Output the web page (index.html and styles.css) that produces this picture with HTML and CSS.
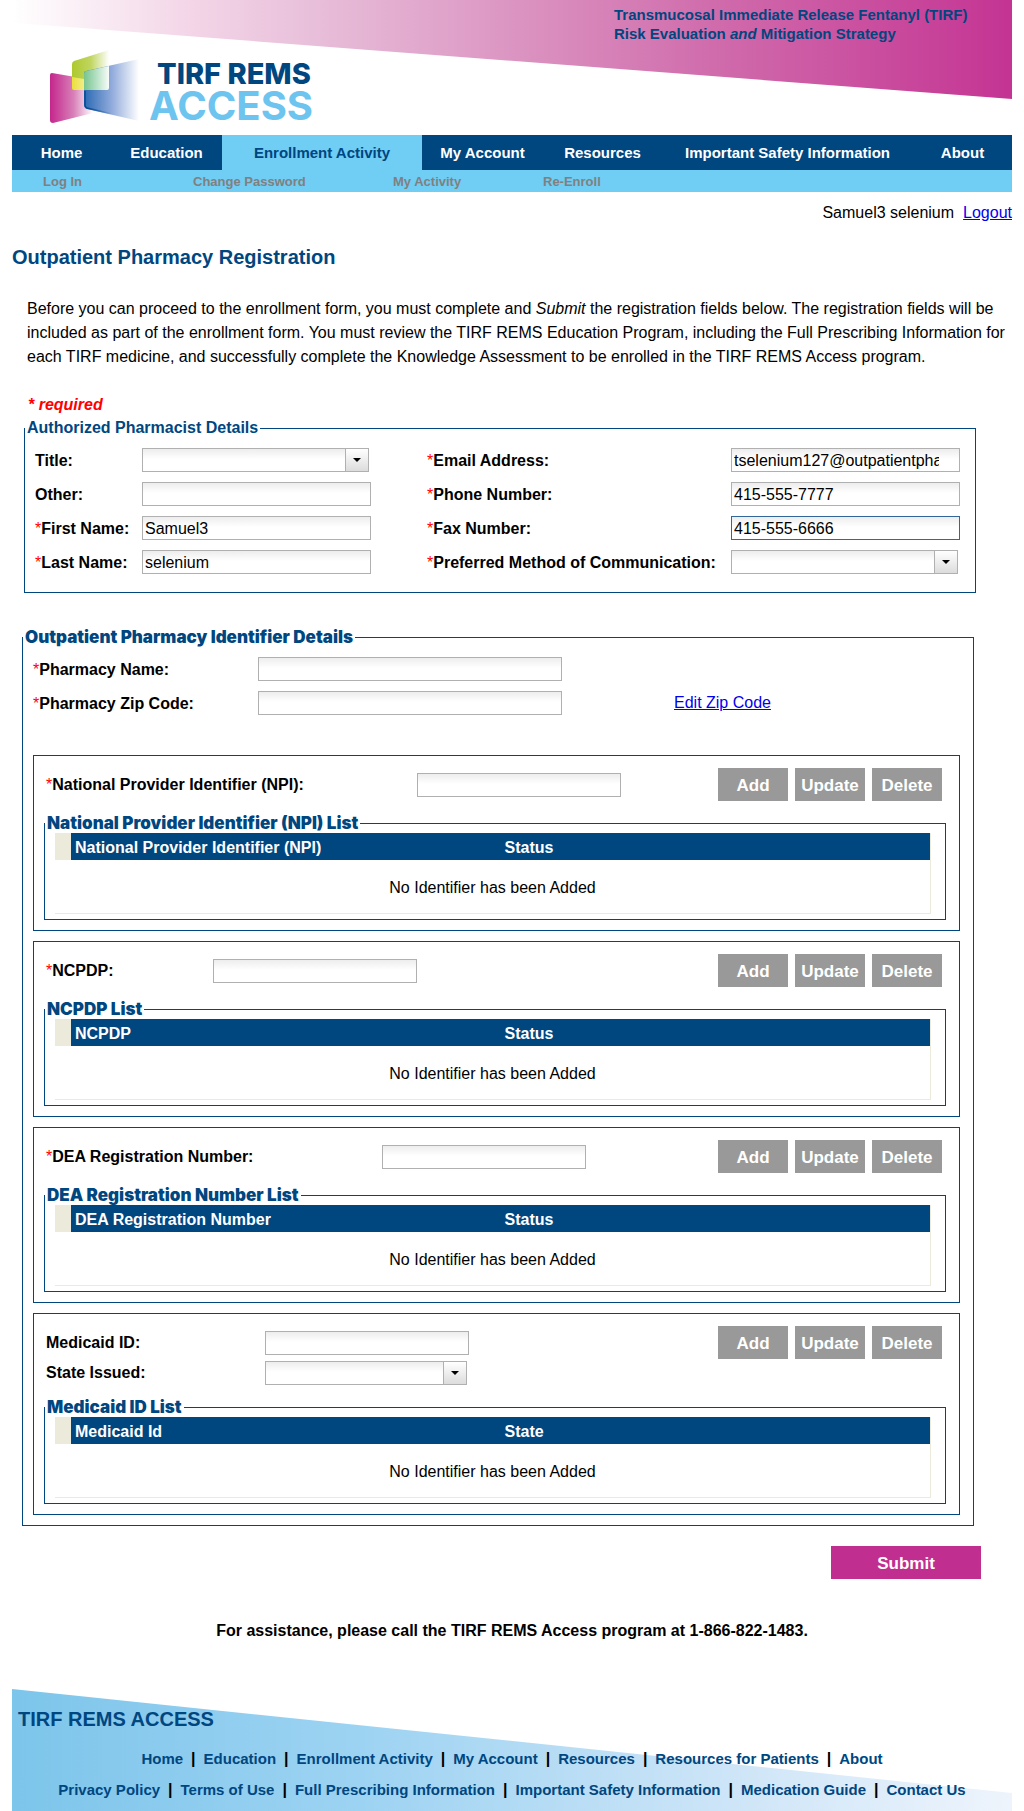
FILE: index.html
```html
<!DOCTYPE html>
<html lang="en">
<head>
<meta charset="utf-8">
<title>Outpatient Pharmacy Registration</title>
<link rel="stylesheet" href="styles.css">
</head>
<body>
<div class="page">
  <header class="masthead">
    <svg class="logo" viewBox="0 0 290 80" width="290" height="80" role="img" aria-label="TIRF REMS ACCESS">
      <defs>
        <linearGradient id="pink"><stop offset="0" stop-color="#c4268c"/><stop offset=".55" stop-color="#d880b8"/><stop offset="1" stop-color="#fff"/></linearGradient>
        <linearGradient id="green"><stop offset="0" stop-color="#adc92c"/><stop offset=".5" stop-color="#c0d560"/><stop offset="1" stop-color="#fff"/></linearGradient>
        <linearGradient id="blue"><stop offset="0" stop-color="#2a6ab4"/><stop offset=".5" stop-color="#90aadb"/><stop offset="1" stop-color="#fff"/></linearGradient>
        <linearGradient id="mint"><stop offset="0" stop-color="#78c48c"/><stop offset=".5" stop-color="#b4e0c4"/><stop offset="1" stop-color="#f8fcf8"/></linearGradient>
        <linearGradient id="yellow"><stop offset="0" stop-color="#ecdf3a"/><stop offset="1" stop-color="#f2ec8c"/></linearGradient>
        <linearGradient id="edge"><stop offset="0" stop-color="#00478f"/><stop offset="1" stop-color="#00478f" stop-opacity="0"/></linearGradient>
      </defs>
      <path d="M12 23Q10 23 10 25V70Q10 73 13 73L53 63V30Z" fill="url(#pink)"/>
      <path d="M34 11Q32 12 32 14V38Q32 40 34 40H67Q69 40 69 38V0Z" fill="url(#green)"/>
      <path d="M46 21Q44 21 44 24V55Q44 58 47 59L99 71V9Z" fill="url(#blue)"/>
      <path d="M44 24Q44 21 46 21L69 16V38Q69 40 67 40H44Z" fill="url(#mint)"/>
      <path d="M32 27L44 29V40H34Q32 40 32 38Z" fill="url(#yellow)"/>
      <path d="M45 41V55Q45 57 47 58L72 64" fill="none" stroke="url(#edge)" stroke-width="1.4"/>
      <text class="logo-top" x="117" y="34">TIRF REMS</text>
      <text class="logo-bottom" x="109" y="70">ACCESS</text>
    </svg>
    <p class="tagline">Transmucosal Immediate Release Fentanyl (TIRF)<br>Risk Evaluation <em>and</em> Mitigation Strategy</p>
  </header>

  <nav class="mainnav" aria-label="Main">
    <a href="#">Home</a><a href="#">Education</a><a href="#" class="current">Enrollment Activity</a><a href="#">My Account</a><a href="#">Resources</a><a href="#">Important Safety Information</a><a href="#">About</a>
  </nav>
  <nav class="subnav" aria-label="Enrollment Activity">
    <a href="#">Log In</a><a href="#">Change Password</a><a href="#">My Activity</a><a href="#">Re-Enroll</a>
  </nav>

  <p class="user"><span>Samuel3 selenium</span><a href="#">Logout</a></p>

  <main>
    <h1 class="title">Outpatient Pharmacy Registration</h1>
    <p class="intro">Before you can proceed to the enrollment form, you must complete and <em>Submit</em> the registration fields below. The registration fields will be included as part of the enrollment form. You must review the TIRF REMS Education Program, including the Full Prescribing Information for each TIRF medicine, and successfully complete the Knowledge Assessment to be enrolled in the TIRF REMS Access program.</p>
    <p class="required-note">* required</p>

    <form>
      <fieldset class="panel pharmacist">
        <legend>Authorized Pharmacist Details</legend>
        <div class="person-grid">
          <label for="title">Title:</label>
          <select id="title" class="field"><option></option></select>
          <label for="email"><i>*</i>Email Address:</label>
          <input id="email" class="field" type="text" value="tselenium127@outpatientpharmacy.com">
          <label for="other">Other:</label>
          <input id="other" class="field" type="text">
          <label for="phone"><i>*</i>Phone Number:</label>
          <input id="phone" class="field" type="text" value="415-555-7777">
          <label for="first"><i>*</i>First Name:</label>
          <input id="first" class="field" type="text" value="Samuel3">
          <label for="fax"><i>*</i>Fax Number:</label>
          <input id="fax" class="field active" type="text" value="415-555-6666">
          <label for="last"><i>*</i>Last Name:</label>
          <input id="last" class="field" type="text" value="selenium">
          <label for="contact"><i>*</i>Preferred Method of Communication:</label>
          <select id="contact" class="field"><option></option></select>
        </div>
      </fieldset>

      <fieldset class="panel pharmacy">
        <legend class="heavy">Outpatient Pharmacy Identifier Details</legend>
        <div class="pharmacy-grid">
          <label for="pname"><i>*</i>Pharmacy Name:</label>
          <input id="pname" class="field wide" type="text">
          <span></span>
          <label for="pzip"><i>*</i>Pharmacy Zip Code:</label>
          <input id="pzip" class="field wide" type="text">
          <a href="#">Edit Zip Code</a>
        </div>

        <section class="identifier">
          <div class="entry">
            <div class="entry-fields npi">
              <label for="npi"><i>*</i>National Provider Identifier (NPI):</label>
              <input id="npi" class="field mid" type="text">
            </div>
            <div class="actions"><button type="button">Add</button><button type="button">Update</button><button type="button">Delete</button></div>
          </div>
          <fieldset class="panel list">
            <legend class="heavy">National Provider Identifier (NPI) List</legend>
            <table>
              <thead><tr><td class="mark"></td><th>National Provider Identifier (NPI)</th><th>Status</th></tr></thead>
              <tbody><tr><td colspan="3">No Identifier has been Added</td></tr></tbody>
            </table>
          </fieldset>
        </section>

        <section class="identifier">
          <div class="entry">
            <div class="entry-fields ncpdp">
              <label for="ncpdp"><i>*</i>NCPDP:</label>
              <input id="ncpdp" class="field mid" type="text">
            </div>
            <div class="actions"><button type="button">Add</button><button type="button">Update</button><button type="button">Delete</button></div>
          </div>
          <fieldset class="panel list">
            <legend class="heavy">NCPDP List</legend>
            <table>
              <thead><tr><td class="mark"></td><th>NCPDP</th><th>Status</th></tr></thead>
              <tbody><tr><td colspan="3">No Identifier has been Added</td></tr></tbody>
            </table>
          </fieldset>
        </section>

        <section class="identifier">
          <div class="entry">
            <div class="entry-fields dea">
              <label for="dea"><i>*</i>DEA Registration Number:</label>
              <input id="dea" class="field mid" type="text">
            </div>
            <div class="actions"><button type="button">Add</button><button type="button">Update</button><button type="button">Delete</button></div>
          </div>
          <fieldset class="panel list">
            <legend class="heavy">DEA Registration Number List</legend>
            <table>
              <thead><tr><td class="mark"></td><th>DEA Registration Number</th><th>Status</th></tr></thead>
              <tbody><tr><td colspan="3">No Identifier has been Added</td></tr></tbody>
            </table>
          </fieldset>
        </section>

        <section class="identifier">
          <div class="entry">
            <div class="entry-fields medicaid">
              <label for="medicaid">Medicaid ID:</label>
              <input id="medicaid" class="field mid" type="text">
              <label for="state">State Issued:</label>
              <select id="state" class="field mid"><option></option></select>
            </div>
            <div class="actions"><button type="button">Add</button><button type="button">Update</button><button type="button">Delete</button></div>
          </div>
          <fieldset class="panel list">
            <legend class="heavy">Medicaid ID List</legend>
            <table>
              <thead><tr><td class="mark"></td><th>Medicaid Id</th><th>State</th></tr></thead>
              <tbody><tr><td colspan="3">No Identifier has been Added</td></tr></tbody>
            </table>
          </fieldset>
        </section>
      </fieldset>

      <div class="submit-row"><button type="submit" class="submit">Submit</button></div>
    </form>

    <p class="assist">For assistance, please call the TIRF REMS Access program at 1-866-822-1483.</p>
  </main>

  <footer class="footer">
    <h2>TIRF REMS ACCESS</h2>
    <nav class="footlinks" aria-label="Footer">
      <a href="#">Home</a><b>|</b><a href="#">Education</a><b>|</b><a href="#">Enrollment Activity</a><b>|</b><a href="#">My Account</a><b>|</b><a href="#">Resources</a><b>|</b><a href="#">Resources for Patients</a><b>|</b><a href="#">About</a>
    </nav>
    <nav class="footlinks" aria-label="Legal">
      <a href="#">Privacy Policy</a><b>|</b><a href="#">Terms of Use</a><b>|</b><a href="#">Full Prescribing Information</a><b>|</b><a href="#">Important Safety Information</a><b>|</b><a href="#">Medication Guide</a><b>|</b><a href="#">Contact Us</a>
    </nav>
  </footer>
</div>
</body>
</html>
```
FILE: styles.css
```css
* { box-sizing: border-box; }
body {
  margin: 0;
  font: 16px/24px "Liberation Sans", Arial, sans-serif;
  color: #000;
  background: #fff;
}
p, h1, h2 { margin: 0; }
a { color: #00e; }
.page { margin: 0 12px; }

.masthead {
  position: relative;
  display: flex;
  justify-content: space-between;
  height: 135px;
}
.masthead::before {
  content: "";
  position: absolute;
  inset: 0 0 36px;
  background: linear-gradient(90deg, #fff 0%, #f3d5e7 18%, #e8bfda 30%, #dc97c3 49%, #d06cac 70%, #c43493 100%);
  clip-path: polygon(0 0, 100% 0, 100% 100%, 0 23%);
}
.logo { position: relative; margin: 50px 0 0 28px; }
.logo-top { font: 800 29px Inter, sans-serif; fill: #00467f; }
.logo-bottom { font: 700 40px Inter, sans-serif; fill: #6dc4ef; }
.tagline {
  position: relative;
  width: 398px;
  padding-top: 5px;
  font-size: 15px;
  font-weight: bold;
  line-height: 19px;
  color: #00467f;
}

.mainnav {
  display: grid;
  grid-template-columns: 99fr 111fr 200fr 121fr 119fr 251fr 99fr;
  background: #00467f;
}
.mainnav a {
  font-size: 15px;
  font-weight: bold;
  line-height: 35px;
  text-align: center;
  text-decoration: none;
  color: #fff;
}
.mainnav .current { background: #70cdf4; color: #00467f; }
.subnav {
  display: grid;
  grid-template-columns: 150fr 200fr 150fr 469fr;
  padding: 1px 0 0 31px;
  background: #70cdf4;
}
.subnav a {
  font-size: 13px;
  font-weight: bold;
  line-height: 21px;
  text-decoration: none;
  color: #808080;
}

.user { display: flex; justify-content: flex-end; gap: 9px; padding-top: 9px; }
.title { margin-top: 20px; font-size: 20px; line-height: 24px; color: #00467f; }
.intro { margin: 28px 0 24px; padding-left: 15px; }
.required-note { padding-left: 16px; font-weight: bold; font-style: italic; color: #f00; }

.panel { min-width: 0; border: 1px solid #00467f; padding: 0; }
.panel legend { padding: 0 2px; font-weight: bold; line-height: 18px; color: #00467f; }
.panel legend.heavy { font-family: Inter, sans-serif; font-size: 17px; font-weight: 900; }
label { height: 24px; padding-top: 1px; font-weight: bold; }
label i { font-weight: normal; font-style: normal; color: #f00; }

.field {
  width: 229px;
  height: 24px;
  padding: 1px 20px 0 2px;
  border: 1px solid #b0b0b0;
  border-radius: 0;
  font: inherit;
  color: #000;
  background: linear-gradient(#ededed, #fff 10px);
}
.field.active { border-color: #336699; }
.wide { width: 304px; }
.mid { width: 204px; }
select.field {
  width: 227px;
  appearance: none;
  background:
    url("data:image/svg+xml,%3Csvg xmlns='http://www.w3.org/2000/svg' width='8' height='4'%3E%3Cpath d='M0 0h8L4 4z'/%3E%3C/svg%3E") right 7px center no-repeat,
    linear-gradient(#b0b0b0, #b0b0b0) right 22px top / 1px 100% no-repeat,
    linear-gradient(#fff, #dcdcdc) right / 22px 100% no-repeat,
    linear-gradient(#ededed, #fff 10px);
}
select.field.mid { width: 202px; }

.pharmacist { margin: 2px 36px 0 12px; }
.person-grid {
  display: grid;
  grid-template-columns: 107fr 285fr 304fr 244fr;
  row-gap: 10px;
  padding: 11px 0 18px 10px;
}
.pharmacy { margin: 35px 38px 0 10px; }
.pharmacy-grid {
  display: grid;
  grid-template-columns: 225fr 416fr 299fr;
  row-gap: 10px;
  padding: 11px 0 40px 10px;
}
.identifier { margin: 0 13px 10px 10px; padding: 12px 13px 10px 10px; border: 1px solid #00467f; }
.entry { display: flex; justify-content: space-between; padding: 0 4px 0 2px; }
.entry-fields { display: grid; row-gap: 6px; padding: 5px 0 7px; }
.entry-fields label { padding-top: 0; }
.npi { grid-template-columns: 371px auto; }
.ncpdp { grid-template-columns: 167px auto; }
.dea { grid-template-columns: 336px auto; }
.medicaid { grid-template-columns: 219px auto; padding-bottom: 3px; }
.actions { display: flex; gap: 7px; }
button {
  width: 70px;
  height: 33px;
  padding: 2px 0 0;
  border: 0;
  font: bold 17px "Liberation Sans", Arial, sans-serif;
  color: #fff;
  background: #999;
}
.list { margin: 10px 0 0; }
.list table {
  width: calc(100% - 24px);
  margin: 1px 14px 5px 10px;
  border-collapse: separate;
  border-spacing: 0;
  border-right: 1px solid #eceadb;
  border-bottom: 1px solid #eceadb;
  table-layout: fixed;
}
.list th {
  height: 27px;
  padding: 2px 4px 0;
  text-align: left;
  color: #fff;
  background: #00467f;
}
.list td { height: 53px; padding: 2px 0 0; text-align: center; }
.list td.mark { width: 16px; height: 27px; background: #eceadb; }

.submit-row { display: flex; justify-content: flex-end; margin: 20px 31px 0 0; }
.submit { width: 150px; background: #c02e90; }
.assist { margin-top: 40px; text-align: center; font-weight: bold; }

.footer {
  position: relative;
  margin-top: 46px;
  padding: 18px 0 9px;
}
.footer::before {
  content: "";
  position: absolute;
  inset: 0;
  z-index: -1;
  background: linear-gradient(90deg, #7dc5eb 0%, #9dd3f2 35%, #cbe4f7 70%, #eef4fc 100%);
  clip-path: polygon(0 0, 100% 104px, 100% 100%, 0 100%);
}
.footer h2 { padding-left: 6px; font-size: 20px; line-height: 24px; color: #00467f; }
.footlinks {
  display: flex;
  justify-content: center;
  gap: 8px;
  padding-top: 7px;
  font-size: 15px;
}
.footlinks:nth-of-type(1) { padding-top: 16px; }
.footlinks a { font-weight: bold; text-decoration: none; color: #00467f; }
.footlinks b { font-size: 16px; }
```
